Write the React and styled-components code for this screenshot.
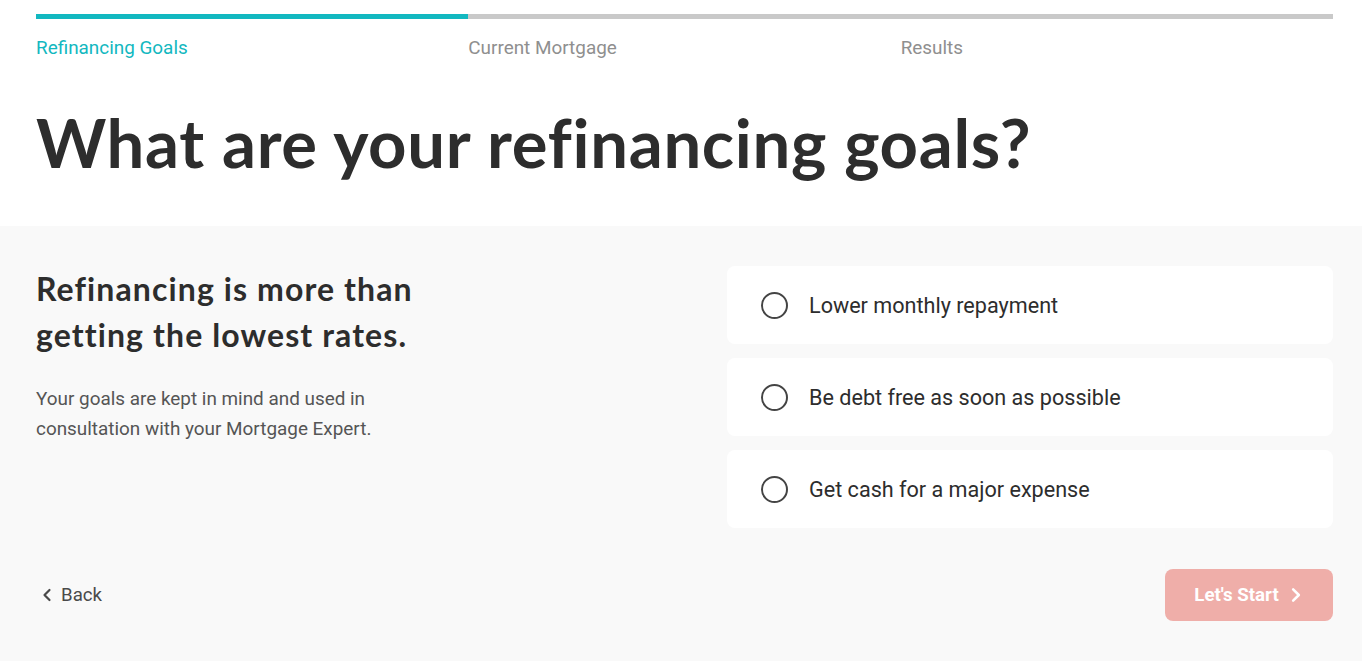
import React from "react";
import styled, { createGlobalStyle } from "styled-components";

const Global = createGlobalStyle`
  html, body { margin: 0; padding: 0; background: #f9f9f9; }
  body { font-family: Roboto, "Liberation Sans", sans-serif; }
  * { box-sizing: border-box; }
`;

const Page = styled.div`
  min-height: 661px;
  background: #f9f9f9;
`;

const Top = styled.header`
  background: #ffffff;
  padding: 14px 29px 0 36px;
  height: 226px;
`;

const Progress = styled.div`
  display: grid;
  grid-template-columns: repeat(3, 1fr);
  width: 1297px;
`;

const Step = styled.div`
  display: flex;
  flex-direction: column;
`;

const Bar = styled.div`
  height: 5px;
  background: ${(p) => (p.$active ? "#12b8c0" : "#c9c9c9")};
`;

const StepLabel = styled.span`
  margin-top: 19px;
  font-size: 18.9px;
  line-height: 20px;
  color: ${(p) => (p.$active ? "#12b8c0" : "#8f8f8f")};
`;

const Title = styled.h1`
  margin: 44px 0 0;
  font-family: Lato, "Noto Sans", sans-serif;
  font-weight: 700;
  font-size: 67px;
  line-height: 80px;
  color: #2d2d2d;
  letter-spacing: 0.7px;
`;

const Body = styled.main`
  padding: 40px 29px 0 36px;
`;

const Columns = styled.div`
  display: grid;
  grid-template-columns: 1fr 606px;
  column-gap: 40px;
  width: 1297px;
`;

const Intro = styled.section`
  padding-top: 0;
`;

const Subtitle = styled.h2`
  margin: 0;
  font-family: Lato, "Noto Sans", sans-serif;
  font-weight: 700;
  font-size: 32px;
  line-height: 46px;
  letter-spacing: 1.1px;
  color: #2d2d2d;
`;

const Text = styled.p`
  margin: 26px 0 0;
  font-size: 18.9px;
  line-height: 30px;
  color: #555555;
  max-width: 375px;
`;

const Options = styled.div`
  display: flex;
  flex-direction: column;
  gap: 14px;
`;

const Option = styled.label`
  display: flex;
  align-items: center;
  gap: 21px;
  height: 78px;
  padding: 0 34px;
  background: #ffffff;
  border-radius: 8px;
  cursor: pointer;
`;

const Radio = styled.span`
  width: 27px;
  height: 27px;
  border-radius: 50%;
  border: 2px solid #444444;
  flex: none;
`;

const OptionText = styled.span`
  font-size: 21.6px;
  color: #2d2d2d;
`;

const Footer = styled.div`
  display: flex;
  justify-content: space-between;
  align-items: center;
  width: 1297px;
  margin-top: 41px;
`;

const BackButton = styled.button`
  display: flex;
  align-items: center;
  gap: 7px;
  background: none;
  border: none;
  padding: 0 0 0 4px;
  font-family: Roboto, sans-serif;
  font-size: 18.7px;
  color: #4a4a4a;
  cursor: pointer;
`;

const StartButton = styled.button`
  display: flex;
  align-items: center;
  justify-content: center;
  gap: 9px;
  width: 168px;
  height: 52px;
  border: none;
  border-radius: 8px;
  background: #efaea9;
  color: #ffffff;
  font-family: Roboto, sans-serif;
  font-weight: 700;
  font-size: 18.7px;
  cursor: pointer;
`;

const Chevron = ({ dir = "left", color, size = 14 }) => (
  <svg width={size} height={size} viewBox="0 0 14 14" fill="none">
    <path
      d={dir === "left" ? "M9.5 2 L4.5 7 L9.5 12" : "M4.5 2 L9.5 7 L4.5 12"}
      stroke={color}
      strokeWidth="2.2"
      strokeLinecap="round"
      strokeLinejoin="round"
    />
  </svg>
);

const steps = ["Refinancing Goals", "Current Mortgage", "Results"];
const goals = [
  "Lower monthly repayment",
  "Be debt free as soon as possible",
  "Get cash for a major expense",
];

export default function App() {
  return (
    <Page>
      <Global />
      <Top>
        <Progress>
          {steps.map((s, i) => (
            <Step key={s}>
              <Bar $active={i === 0} />
              <StepLabel $active={i === 0}>{s}</StepLabel>
            </Step>
          ))}
        </Progress>
        <Title>What are your refinancing goals?</Title>
      </Top>
      <Body>
        <Columns>
          <Intro>
            <Subtitle>
              Refinancing is more than
              <br />
              getting the lowest rates.
            </Subtitle>
            <Text>
              Your goals are kept in mind and used in consultation with your
              Mortgage Expert.
            </Text>
          </Intro>
          <Options>
            {goals.map((g) => (
              <Option key={g}>
                <Radio />
                <OptionText>{g}</OptionText>
              </Option>
            ))}
          </Options>
        </Columns>
        <Footer>
          <BackButton>
            <Chevron dir="left" color="#4a4a4a" size={14} />
            Back
          </BackButton>
          <StartButton>
            Let's Start
            <Chevron dir="right" color="#ffffff" size={16} />
          </StartButton>
        </Footer>
      </Body>
    </Page>
  );
}
